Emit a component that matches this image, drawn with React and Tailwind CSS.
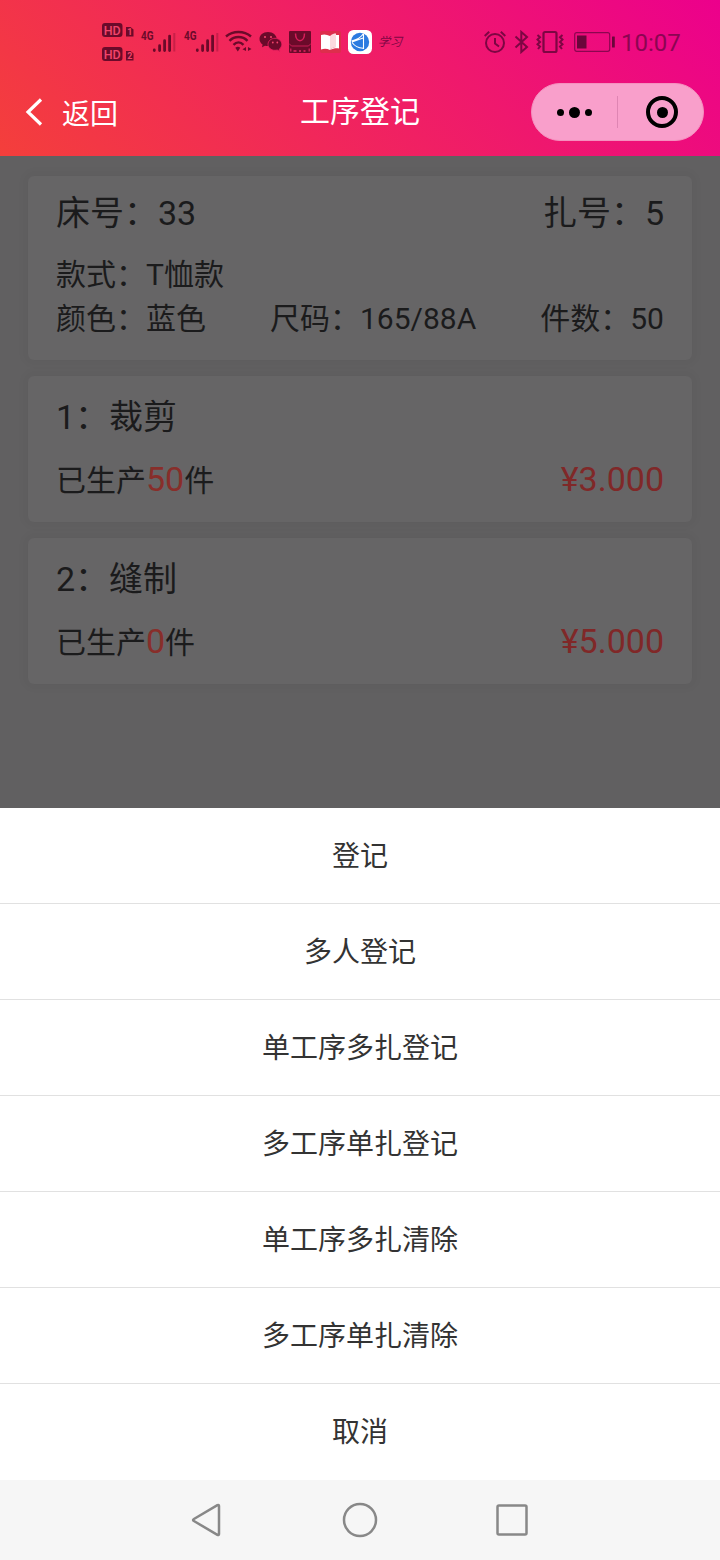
import React from 'react';

const actions = ['登记', '多人登记', '单工序多扎登记', '多工序单扎登记', '单工序多扎清除', '多工序单扎清除', '取消'];

const processes = [
  { id: 1, name: '裁剪', done: 50, price: '3.000' },
  { id: 2, name: '缝制', done: 0, price: '5.000' },
];

const HdBadge = ({ sim }) => (
  <svg className="block w-8 h-[14px]" viewBox="0 0 32 14">
    <rect x="0" y="0" width="20.5" height="14" rx="3" fill="#6b0a2a" />
    <text x="10.2" y="11.6" textAnchor="middle" fontSize="12.5" fontWeight="500" fill="#f2446b">HD</text>
    <path d="M24 4h4.5l3 2.5v7H24z" fill="#6b0a2a" />
    <text x="27.8" y="12" textAnchor="middle" fontSize="9" fontWeight="700" fill="#f2446b">{sim}</text>
  </svg>
);

const Signal = () => (
  <svg className="block w-9 h-7 overflow-visible" viewBox="0 0 36 28">
    <text x="0" y="12" fontSize="12.5" fontWeight="700" textLength="12.5" lengthAdjust="spacingAndGlyphs" fill="#6b0a2a">4G</text>
    <g stroke="#6b0a2a" strokeWidth="2.8" strokeLinecap="round">
      <path d="M13.3 22v.6M18.6 17.7v4.9M23.6 12.7v9.9M28.6 8.1v14.5" />
      <path d="M33.3 5v18.5" strokeWidth="2" strokeLinecap="butt" opacity=".3" />
    </g>
  </svg>
);

const Wifi = () => (
  <svg className="block w-[27px] h-6" viewBox="0 0 27 24" fill="none" stroke="#6b0a2a" strokeWidth="2.4">
    <path d="M1 6.5c7-6 18-6 25 0M4.5 10.8c5-5 13-5 18 0M8.5 14.8c3-3 7-3 10 0" />
    <path d="M10.3 17.8a4 4 0 0 1 5 0l-2.5 3.6z" fill="#6b0a2a" stroke="none" />
    <path d="M21 17v4l-3.5-1.8zM23 17v4l3.5-2z" fill="#6b0a2a" stroke="none" />
  </svg>
);

const WeChat = () => (
  <svg className="block w-[23px] h-5" viewBox="0 0 23 20">
    <path d="M9 0C4 0 .5 3.2.5 7c0 2.3 1.2 4.2 3.1 5.5L3 15.2l3-1.5c1 .3 2 .4 3 .4 4.9 0 8.7-3.1 8.7-7S14 0 9 0z" fill="#6b0a2a" />
    <path d="M16 6.3c-4 0-7 2.7-7 6s3 6 7 6c.8 0 1.6-.1 2.3-.3l2.5 1.4-.6-2.2c1.6-1.2 2.6-2.9 2.6-4.9 0-3.3-3-6-6.8-6z" fill="#6b0a2a" stroke="#ee1f62" strokeWidth=".8" />
    <g fill="#f2446b">
      <circle cx="6" cy="5" r="1.1" />
      <circle cx="12" cy="5" r="1.1" />
      <circle cx="13.8" cy="10.5" r=".9" />
      <circle cx="18.3" cy="10.5" r=".9" />
    </g>
  </svg>
);

const ShopBag = () => (
  <svg className="block w-[22px] h-[22px]" viewBox="0 0 22 22">
    <rect width="22" height="22" rx="1" fill="#6b0a2a" />
    <path d="M6.5 2.5c0 9.5 9 9.5 9 0" fill="none" stroke="#d81e5a" strokeWidth="1.5" />
    <path d="M0 12.5L2.5 15h17l2.5-2.5" fill="none" stroke="#c81c55" strokeWidth="1" />
    <path d="M1 17.5h1.5v3H1zM4.5 19h3v2h-3zM10 21v-2h2v2zM14.5 19h2v2h-2zM19.5 17.5H21v3h-1.5z" fill="#c81c55" />
  </svg>
);

const Book = () => (
  <svg className="block w-[21px] h-[22px]" viewBox="0 0 21 22">
    <rect width="21" height="22" rx="2" fill="#dd2e4c" />
    <path d="M1 4c3-1 6-.6 9 1v14c-3-1.5-6-1.5-9-.5z" fill="#fff" />
    <path d="M10 5c2-2 4-2.500 6-2.500V16c-2 .2-4 1-6 3z" fill="#fbd9de" />
    <path d="M16 4h3v13.5c-3-.5-6 0-9 1.5 2-2 4-3 6-3z" fill="#fff" />
  </svg>
);

const Globe = () => (
  <svg className="block w-6 h-6" viewBox="0 0 24 24">
    <rect width="24" height="24" rx="5.5" fill="#fff" />
    <circle cx="12" cy="12" r="9.2" fill="#2c7be0" />
    <path d="M3.5 11C8 10 13 7.5 15.500 3.500M4 12.500c3 4 7 5.500 11 5.800M15.500 4v15M4 12l11-4" fill="none" stroke="#fff" strokeWidth="1.1" />
  </svg>
);

const Alarm = () => (
  <svg className="block w-[22px] h-6" viewBox="0 0 22 24" fill="none" stroke="#7d0643" strokeWidth="2">
    <circle cx="11" cy="13" r="9" />
    <path d="M11 8v5.5l4 3M.7 6l4.5-4.2M21.3 6l-4.5-4.2" />
  </svg>
);

const Bluetooth = () => (
  <svg className="block w-[15px] h-6" viewBox="0 0 15 24" fill="none" stroke="#7d0643" strokeWidth="2">
    <path d="M1.5 6.5L13 17l-5.7 5V2L13 7 1.5 17.5" />
  </svg>
);

const Vibrate = () => (
  <svg className="block w-7 h-6" viewBox="0 0 28 24" fill="none" stroke="#7d0643">
    <rect x="7.5" y="2" width="13" height="20" rx="1.5" strokeWidth="2.2" />
    <path d="M1.5 5L4 7.3 1.5 9.6 4 12l-2.5 2.3L4 16.5 2 19M26.5 5L24 7.3l2.5 2.3L24 12l2.5 2.3-2.5 2.2 2 2.5" strokeWidth="2" />
  </svg>
);

const Battery = () => (
  <svg className="block w-[41px] h-5" viewBox="0 0 41 20">
    <rect x=".7" y=".7" width="35" height="18.6" rx="2" fill="none" stroke="#8c0650" strokeWidth="1.2" />
    <rect x="3" y="3.5" width="9.5" height="13" fill="#6b063b" />
    <rect x="38" y="4.5" width="2.8" height="11" rx=".5" fill="#6b063b" />
  </svg>
);

const StatusBar = () => (
  <div className="flex items-center h-[84px] pl-[102px] pr-10">
    <div className="flex flex-col gap-[10px]">
      <HdBadge sim="1" />
      <HdBadge sim="2" />
    </div>
    <div className="flex ml-[7px] gap-[7px]">
      <Signal />
      <Signal />
    </div>
    <div className="flex items-center ml-[5px] gap-[7px]">
      <Wifi />
      <WeChat />
      <ShopBag />
      <div className="ml-[2px]"><Book /></div>
      <Globe />
    </div>
    <span className="ml-[6px] font-['Liberation_Serif','Noto_Sans_CJK_SC',serif] italic text-[12px] leading-none text-[#7d0643] -skew-x-6">学习</span>
    <div className="flex items-center ml-auto">
      <Alarm />
      <div className="ml-2"><Bluetooth /></div>
      <div className="ml-[7px]"><Vibrate /></div>
      <div className="ml-[10px]"><Battery /></div>
      <span className="ml-[6px] w-[59px] pt-0.5 text-2xl leading-none text-[#8c0552]">10:07</span>
    </div>
  </div>
);

const NavBar = () => (
  <div className="grid grid-cols-[1fr_auto_1fr] items-center -mt-px h-[58px] text-white">
    <div className="flex items-center pl-[25px]">
      <svg className="w-[18px] h-7" viewBox="0 0 18 28" fill="none" stroke="currentColor" strokeWidth="3.2">
        <path d="M16 1.5L3 14l13 12.5" />
      </svg>
      <span className="ml-[19px] pt-1.5 text-[28px] leading-none">返回</span>
    </div>
    <h1 className="text-[30px] leading-none">工序登记</h1>
    <div className="flex items-center justify-self-end mr-4 w-[173px] h-[58px] rounded-full bg-[#f99fcb] border border-[#f58fbe]">
      <div className="flex flex-1 items-center justify-center gap-[5px] pr-px">
        <i className="w-[7px] h-[7px] rounded-full bg-black" />
        <i className="w-[11px] h-[11px] rounded-full bg-black" />
        <i className="w-[7px] h-[7px] rounded-full bg-black" />
      </div>
      <div className="w-px h-8 bg-[#df85b3]" />
      <div className="flex w-[85px] items-center justify-center pl-[3px]">
        <div className="flex items-center justify-center w-8 h-8 rounded-full border-4 border-black">
          <i className="w-[11px] h-[11px] rounded-full bg-black" />
        </div>
      </div>
    </div>
  </div>
);

const Card = ({ className, children }) => (
  <div className={`rounded-md bg-[#666566] px-7 shadow-[0_0_8px_4px_rgba(0,0,0,0.03)] ${className}`}>{children}</div>
);

const BundleCard = () => (
  <Card className="h-[184px] pt-[14px]">
    <div className="flex justify-between text-[34px] leading-[46px]">
      <span>床号：33</span>
      <span>扎号：5</span>
    </div>
    <div className="mt-4 text-[30px] leading-[45px]">款式：T恤款</div>
    <div className="flex justify-between text-[30px] leading-[43px]">
      <span>颜色：蓝色</span>
      <span>尺码：165/88A</span>
      <span>件数：50</span>
    </div>
  </Card>
);

const ProcessCard = ({ item }) => (
  <Card className="h-[146px] pt-[18px]">
    <div className="text-[34px] leading-[46px]">{item.id}：{item.name}</div>
    <div className="flex justify-between items-baseline mt-4 text-[30px] leading-[46px]">
      <span>
        已生产<span className="text-[34px] text-[#882e2a]">{item.done}</span>件
      </span>
      <span className="text-[34px] text-[#802828]">¥{item.price}</span>
    </div>
  </Card>
);

const ActionSheet = () => (
  <div className="bg-white text-[#333]">
    {actions.map((label, i) => (
      <button
        key={label}
        className={`block w-full h-24 pt-0.5 text-center text-[28px] leading-10 ${i < actions.length - 1 ? 'border-b border-[#e1e1e1]' : ''}`}
      >
        {label}
      </button>
    ))}
  </div>
);

const SystemNav = () => (
  <div className="flex items-center justify-center gap-[116px] h-20 bg-[#f6f6f6]">
    <svg className="w-9 h-9" viewBox="0 0 36 36" fill="none" stroke="#888" strokeWidth="2.5" strokeLinejoin="round">
      <path d="M3.9 17L27.4 3.2q1.6-.9 1.6.9v27.8q0 1.8-1.6.9L3.9 19q-1.700-1 0-2z" />
    </svg>
    <svg className="w-9 h-9" viewBox="0 0 36 36" fill="none" stroke="#888" strokeWidth="2.5">
      <circle cx="18" cy="18" r="16" />
    </svg>
    <svg className="w-9 h-9" viewBox="0 0 36 36" fill="none" stroke="#888" strokeWidth="2.5">
      <rect x="3.5" y="3.5" width="29" height="29" rx="1.5" />
    </svg>
  </div>
);

const App = () => {
  return (
    <div className="flex flex-col w-[720px] h-[1560px] overflow-hidden font-['Roboto','Noto_Sans_CJK_SC',sans-serif]">
      <header className="h-[156px] shrink-0 bg-[linear-gradient(45deg,#f43f3b,#ec008c)]">
        <StatusBar />
        <NavBar />
      </header>

      {/* Page dimmed behind the action sheet */}
      <main className="flex flex-col gap-4 flex-1 px-7 pt-5 bg-[#616061] text-[#1b1b1c]">
        <BundleCard />
        {processes.map((item) => (
          <ProcessCard key={item.id} item={item} />
        ))}
      </main>

      <ActionSheet />
      <SystemNav />
    </div>
  );
};

export default App;
